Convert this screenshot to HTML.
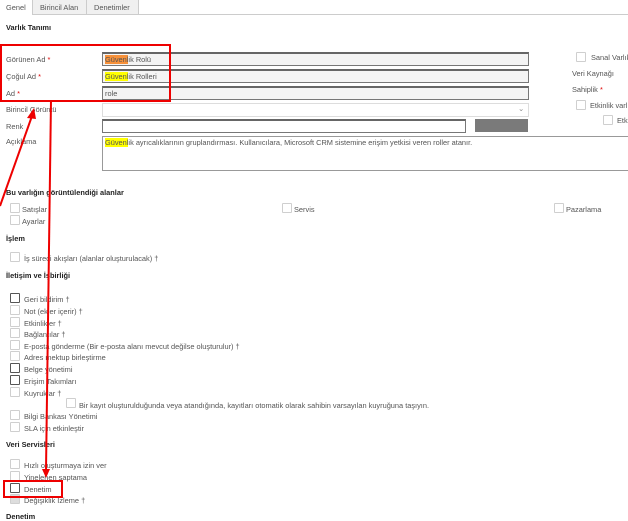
<!DOCTYPE html><html><head><meta charset="utf-8"><style>
body{margin:0;width:628px;height:518px;overflow:hidden;background:#fff;font-family:"Segoe UI","Liberation Sans",sans-serif;font-size:7.4px;color:#555;position:relative}
.a{position:absolute;white-space:nowrap}
.b{font-weight:bold;color:#222}
.cb{position:absolute;width:8px;height:8px;border:1px solid #cfcfcf;border-radius:1px;background:#fff}
.cb.d{border-color:#555}
.in{position:absolute;background:#f4f4f4;border:1px solid #777;border-top:2px solid #666;box-sizing:border-box;padding-left:2px;line-height:11px}
.hl{background:#ff0}
.st{color:#d00}
</style></head><body>
<div class="a" style="left:0;top:14px;width:628px;height:1px;background:#ccc"></div>
<div class="a" style="left:0;top:0;width:32px;height:15px;background:#fff;border-right:1px solid #ccc"></div>
<div class="a" style="left:33px;top:0;width:53px;height:14px;background:#f0f0f0;border-right:1px solid #ccc"></div>
<div class="a" style="left:87px;top:0;width:51px;height:14px;background:#f0f0f0;border-right:1px solid #ccc"></div>
<div class="a" style="left:6px;top:3px">Genel</div>
<div class="a" style="left:40px;top:3px">Birincil Alan</div>
<div class="a" style="left:94px;top:3px">Denetimler</div>
<div class="a b" style="left:6px;top:23px">Varlık Tanımı</div>
<div class="a" style="left:6px;top:55px">Görünen Ad <span class="st">*</span></div>
<div class="a" style="left:6px;top:72px">Çoğul Ad <span class="st">*</span></div>
<div class="a" style="left:6px;top:89px">Ad <span class="st">*</span></div>
<div class="a" style="left:6px;top:105px">Birincil Görüntü</div>
<div class="a" style="left:6px;top:122px">Renk</div>
<div class="a" style="left:6px;top:137px">Açıklama</div>
<div class="in" style="left:102px;top:52px;width:427px;height:14px"><span style="background:#f7913a">Güvenl</span>ik Rolü</div>
<div class="in" style="left:102px;top:69px;width:427px;height:14px"><span class="hl">Güvenl</span>ik Rolleri</div>
<div class="in" style="left:102px;top:86px;width:427px;height:14px">role</div>
<div class="a" style="left:102px;top:103px;width:425px;height:12px;border:1px solid #ddd"></div>
<div class="a" style="left:518px;top:104px;color:#888">⌄</div>
<div class="a" style="left:102px;top:119px;width:362px;height:11px;border:1px solid #777;border-top:2px solid #666"></div>
<div class="a" style="left:475px;top:119px;width:53px;height:13px;background:#7a7a7a"></div>
<div class="a" style="left:102px;top:136px;width:530px;height:35px;border:1px solid #999;box-sizing:border-box;padding:1px 2px"><span class="hl">Güvenl</span>ik ayrıcalıklarının gruplandırması. Kullanıcılara, Microsoft CRM sistemine erişim yetkisi veren roller atanır.</div>
<div class="a" style="left:0;top:44px;width:167px;height:54px;border:2px solid #e00"></div>
<div class="cb" style="left:576px;top:52px"></div><div class="a" style="left:591px;top:53px">Sanal Varlık</div>
<div class="a" style="left:572px;top:69px">Veri Kaynağı</div>
<div class="a" style="left:572px;top:85px">Sahiplik <span class="st">*</span></div>
<div class="cb" style="left:576px;top:100px"></div><div class="a" style="left:590px;top:101px">Etkinlik varl</div>
<div class="cb" style="left:603px;top:115px"></div><div class="a" style="left:617px;top:116px">Etk</div>
<div class="a b" style="left:6px;top:188px">Bu varlığın görüntülendiği alanlar</div>
<div class="cb" style="left:10px;top:203px"></div><div class="a" style="left:22px;top:205px">Satışlar</div>
<div class="cb" style="left:10px;top:215px"></div><div class="a" style="left:22px;top:217px">Ayarlar</div>
<div class="cb" style="left:282px;top:203px"></div><div class="a" style="left:294px;top:205px">Servis</div>
<div class="cb" style="left:554px;top:203px"></div><div class="a" style="left:566px;top:205px">Pazarlama</div>
<div class="a b" style="left:6px;top:234px">İşlem</div>
<div class="cb" style="left:10px;top:252px"></div><div class="a" style="left:24px;top:254px">İş süreci akışları (alanlar oluşturulacak) †</div>
<div class="a b" style="left:6px;top:271px">İletişim ve İşbirliği</div>
<div class="cb d" style="left:10px;top:293px"></div><div class="a" style="left:24px;top:295px">Geri bildirim †</div>
<div class="cb" style="left:10px;top:305px"></div><div class="a" style="left:24px;top:307px">Not (ekler içerir) †</div>
<div class="cb" style="left:10px;top:317px"></div><div class="a" style="left:24px;top:319px">Etkinlikler †</div>
<div class="cb" style="left:10px;top:328px"></div><div class="a" style="left:24px;top:330px">Bağlantılar †</div>
<div class="cb" style="left:10px;top:340px"></div><div class="a" style="left:24px;top:342px">E-posta gönderme (Bir e-posta alanı mevcut değilse oluşturulur) †</div>
<div class="cb" style="left:10px;top:351px"></div><div class="a" style="left:24px;top:353px">Adres mektup birleştirme</div>
<div class="cb d" style="left:10px;top:363px"></div><div class="a" style="left:24px;top:365px">Belge yönetimi</div>
<div class="cb d" style="left:10px;top:375px"></div><div class="a" style="left:24px;top:377px">Erişim Takımları</div>
<div class="cb" style="left:10px;top:387px"></div><div class="a" style="left:24px;top:389px">Kuyruklar †</div>
<div class="cb" style="left:66px;top:398px"></div><div class="a" style="left:79px;top:401px">Bir kayıt oluşturulduğunda veya atandığında, kayıtları otomatik olarak sahibin varsayılan kuyruğuna taşıyın.</div>
<div class="cb" style="left:10px;top:410px"></div><div class="a" style="left:24px;top:412px">Bilgi Bankası Yönetimi</div>
<div class="cb" style="left:10px;top:422px"></div><div class="a" style="left:24px;top:424px">SLA için etkinleştir</div>
<div class="a b" style="left:6px;top:440px">Veri Servisleri</div>
<div class="cb" style="left:10px;top:459px"></div><div class="a" style="left:24px;top:461px">Hızlı oluşturmaya izin ver</div>
<div class="cb" style="left:10px;top:471px"></div><div class="a" style="left:24px;top:473px">Yinelenen saptama</div>
<div class="cb d" style="left:10px;top:483px"></div><div class="a" style="left:24px;top:485px">Denetim</div>
<div class="cb" style="left:10px;top:494px;background:#ddd"></div><div class="a" style="left:24px;top:496px">Değişiklik İzleme †</div>
<div class="a b" style="left:6px;top:512px">Denetim</div>
<div class="a" style="left:3px;top:480px;width:56px;height:14px;border:2px solid #e00"></div>
<svg class="a" style="left:0;top:0" width="628" height="518">
<line x1="0" y1="206" x2="32" y2="116" stroke="#e00" stroke-width="2"/>
<polygon points="34,108 27,118 36,119" fill="#e00"/>
<line x1="51" y1="100" x2="46" y2="470" stroke="#e00" stroke-width="2"/>
<polygon points="46,478 42,469 50,469" fill="#e00"/>
</svg>
</body></html>
